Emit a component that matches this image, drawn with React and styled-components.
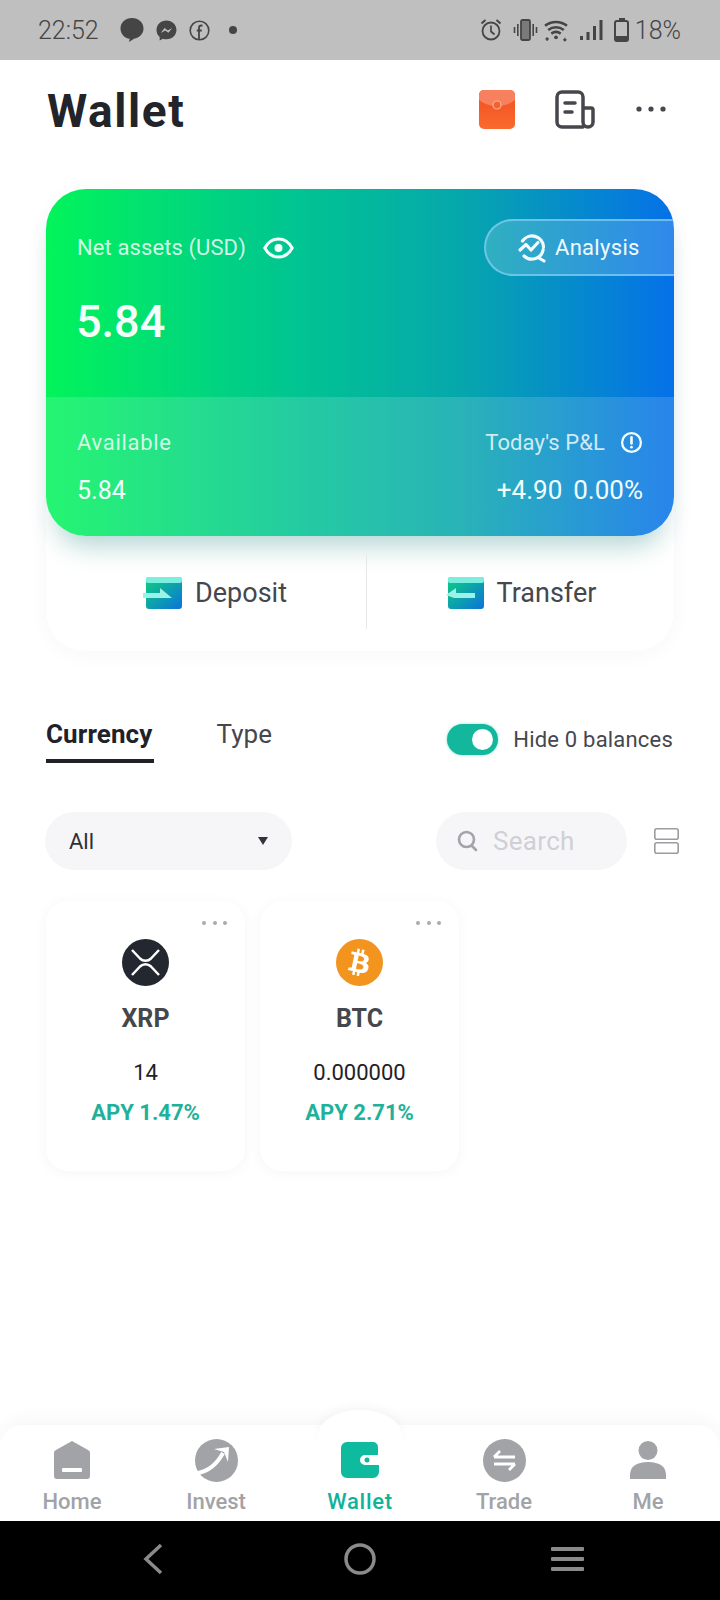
import React from "react";
import styled, { createGlobalStyle } from "styled-components";
import { FaBtc } from "react-icons/fa";

const Global = createGlobalStyle`
  html, body { margin: 0; padding: 0; background: #fff; }
  * { box-sizing: border-box; }
  body { font-family: Roboto, "Liberation Sans", sans-serif; }
`;

const Page = styled.div`
  width: 720px; height: 1600px; display: flex; flex-direction: column; overflow: hidden; background: #fff;
`;
const StatusBar = styled.div`
  height: 60px; flex: none; background: #bfbfbf; color: #454545; display: flex; align-items: center;
  padding: 0 39px 0 38px; font-size: 25px; font-weight: 300;
`;
const StatusGroup = styled.div`
  display: flex; align-items: center; gap: ${p => p.$gap ?? 12}px; margin-left: ${p => p.$ml || 0}px;
`;
const StatusIcon = styled.span`display: flex; margin-left: ${p => p.$ml || 0}px;`;
const Spacer = styled.div`flex: 1;`;
const Header = styled.header`
  height: 98px; flex: none; display: flex; align-items: center; padding: 0 54px 0 47px;
`;
const Title = styled.h1`
  margin: 4px 0 0; flex: 1; font-size: 46px; font-weight: 700; color: #22242a; letter-spacing: 1.6px;
`;
const HeaderIcons = styled.div`display: flex; align-items: center;`;
const HeaderIcon = styled.div`display: flex; margin-left: ${p => p.$ml || 0}px;`;

const Main = styled.main`flex: 1; min-height: 0; padding: 31px 46px 0; overflow: hidden;`;

const AssetPanel = styled.section`
  width: 628px; border-radius: 40px; background: #fff;
  box-shadow: 0 4px 22px rgba(40, 60, 80, 0.035);
`;
const GradientCard = styled.div`
  height: 347px; border-radius: 40px; overflow: hidden; color: #fff; display: flex; flex-direction: column;
  background: linear-gradient(90deg, #02f45a 0%, #00c690 38%, #06a7ac 66%, #0571e9 100%);
  box-shadow: 0 20px 26px -10px rgba(0, 120, 110, 0.3);
`;
const CardTop = styled.div`height: 208px; flex: none; padding-top: 30px;`;
const AssetRow = styled.div`display: flex; align-items: center; justify-content: space-between; height: 57px;`;
const AssetLabel = styled.div`
  display: flex; align-items: center; padding-left: 31px; gap: 17px; font-size: 22px; letter-spacing: .1px; color: rgba(255,255,255,.82);
`;
const AnalysisPill = styled.div`
  width: 190px; height: 57px; display: flex; align-items: center; gap: 8px; padding-left: 31px;
  border: 2px solid rgba(130, 205, 245, .75); border-right: 0; border-radius: 29px 0 0 29px;
  background: rgba(255,255,255,.17); font-size: 22px; letter-spacing: .3px; color: #f0fbff;
`;
const BigValue = styled.div`
  padding-left: 30px; margin-top: 23px; font-size: 45px; line-height: 46px; font-weight: 500; color: #f4fffb;
`;
const CardBottom = styled.div`
  flex: 1; background: rgba(255,255,255,.14); padding: 30px 31px 0 31px; display: grid;
  grid-template-columns: 1fr auto; grid-auto-rows: 30px; row-gap: 18px; align-items: center;
`;
const SmallLabel = styled.div`
  display: flex; align-items: center; gap: 15px; font-size: 22px; letter-spacing: ${p => (p.$right ? 0.1 : 0.7)}px; color: rgba(255,255,255,.8);
  justify-content: ${p => (p.$right ? "flex-end" : "flex-start")};
`;
const SmallValue = styled.div`
  display: flex; gap: 11px; font-size: ${p => (p.$right ? 26 : 25)}px; color: #f2fffb; justify-content: ${p => (p.$right ? "flex-end" : "flex-start")};
`;
const ActionRow = styled.div`
  height: 115px; display: grid; grid-template-columns: 321px 1fr; padding-top: 18px; align-items: start;
`;
const ActionButton = styled.div`
  height: 75px; display: flex; align-items: center; justify-content: center; gap: 13px; font-size: 27px; color: #45474d;
  padding-left: ${p => (p.$divider ? 20 : 2)}px; padding-top: 3px;
  border-right: ${p => (p.$divider ? "1px solid #e6e8ea" : "0")};
`;

const TabsRow = styled.div`margin-top: 65px; display: flex; align-items: center; justify-content: space-between;`;
const Tabs = styled.div`display: flex; gap: 62px;`;
const Tab = styled.div`
  height: 47px; line-height: 36px; font-size: 26px; padding-right: 2px;
  letter-spacing: .1px;
  font-weight: ${p => (p.$active ? 700 : 400)}; color: ${p => (p.$active ? "#202228" : "#45474d")};
  border-bottom: 4px solid ${p => (p.$active ? "#202228" : "transparent")};
`;
const ToggleWrap = styled.div`display: flex; align-items: center; gap: 15px; font-size: 22px; letter-spacing: .2px; margin-right: 1px; color: #45474d;`;
const Toggle = styled.div`
  width: 51px; height: 31px; border-radius: 16px; background: #12b79c; display: flex; align-items: center;
  justify-content: flex-end; padding-right: 5px; box-shadow: 0 0 3px rgba(20,200,170,.5);
`;
const Knob = styled.div`width: 21px; height: 21px; border-radius: 50%; background: #fff;`;

const FilterRow = styled.div`margin-top: 49px; display: flex; align-items: center;`;
const Select = styled.div`
  width: 247px; height: 58px; margin-left: -1px; border-radius: 29px; background: #f6f6f8; display: flex; align-items: center;
  justify-content: space-between; padding: 0 24px; font-size: 22px; color: #2e3036;
`;
const Caret = styled.div`
  width: 0; height: 0; border-left: 5.5px solid transparent; border-right: 5.5px solid transparent; border-top: 8px solid #33353a;
`;
const SearchBox = styled.div`
  width: 191px; height: 58px; margin-left: auto; border-radius: 29px; background: #f6f6f8; display: flex; align-items: center;
  gap: 15px; padding-left: 21px; font-size: 26px; letter-spacing: .3px; color: #cfd0d5;
`;
const LayoutButton = styled.div`display: flex; margin-left: 27px; margin-right: -5px;`;

const CoinGrid = styled.div`margin-top: 31px; display: grid; grid-template-columns: repeat(3, 199px); gap: 15px;`;
const CoinCard = styled.div`
  height: 270px; border-radius: 22px; background: #fff; box-shadow: 0 2px 14px rgba(30,40,60,.045);
  display: flex; flex-direction: column; align-items: center; padding-top: 18px;
`;
const Dots = styled.div`
  align-self: flex-end; margin-right: 18px; display: flex; gap: 6.500px; height: 8px; align-items: center;
  & > i { width: 4px; height: 4px; border-radius: 50%; background: #a9abaf; display: block; }
`;
const CoinLogo = styled.div`
  width: 47px; height: 47px; margin-top: 12px; border-radius: 50%; background: ${p => p.$bg};
  display: flex; align-items: center; justify-content: center; color: #fff;
`;
const CoinSymbol = styled.div`margin-top: 18px; line-height: 30px; font-size: 25px; font-weight: 700; color: #45474c;`;
const CoinAmount = styled.div`margin-top: 24px; line-height: 30px; font-size: 22px; color: #1f2126;`;
const CoinApy = styled.div`margin-top: 10px; line-height: 30px; font-size: 22px; font-weight: 700; color: #1fb19b;`;

const TabBar = styled.nav`
  position: relative; height: 96px; flex: none; background: #fff; border-radius: 22px 22px 0 0;
  box-shadow: 0 -6px 18px rgba(30,40,60,.035); display: grid; grid-template-columns: repeat(5, 144px);
`;
const Bump = styled.div`
  position: absolute; left: 318px; top: -15px; width: 84px; height: 50px; border-radius: 50%; background: #fff;
  box-shadow: 0 -5px 10px rgba(30,40,60,.03);
`;
const TabItem = styled.div`
  position: relative; display: flex; flex-direction: column; align-items: center; padding-top: 13px;
  font-size: 22px; font-weight: 500; letter-spacing: ${p => (p.$active ? 0.7 : 0)}px; color: ${p => (p.$active ? "#10b39a" : "#a2a3a6")};
`;
const TabIcon = styled.div`height: 44px; display: flex; align-items: center; justify-content: center;`;
const TabLabel = styled.div`line-height: 28px; margin-top: 6px;`;
const NavBar = styled.div`
  height: 79px; flex: none; background: #000; display: grid; grid-template-columns: repeat(3, 207px); align-items: center;
  justify-content: center; justify-items: center; padding-bottom: 4px;
`;

const Chat = () => <svg width="24" height="26" viewBox="0 0 24 26"><path d="M12 1C5.5 1 .5 5.6.5 11.5c0 5.400 4 9.600 9.200 10.300L9 25l5-3.300c5.500-1 9.500-5 9.500-10.200C23.500 5.600 18.500 1 12 1z" fill="#454545"/></svg>;
const Messenger = () => <svg width="21" height="21" viewBox="0 0 20 20"><path d="M10 .5C4.600.5.500 4.400.500 9.500c0 2.700 1.100 5 3 6.600V19.500l3.100-1.700c1.100.3 2.200.5 3.400.5 5.400 0 9.500-3.900 9.500-8.800S15.400.5 10 .5z" fill="#454545"/><path d="M4.500 12.300l3.700-4.600 3 2.300 4.300-2.300-3.700 4.500-3-2.300z" fill="#bfbfbf"/></svg>;
const Fb = () => <svg width="21" height="21" viewBox="0 0 21 21" fill="none"><circle cx="10.500" cy="10.500" r="9.300" stroke="#454545" strokeWidth="1.600"/><path d="M13.500 5.500h-1.300c-1.400 0-2.200.9-2.200 2.400V19M7.800 10.500h5" stroke="#454545" strokeWidth="1.800"/></svg>;
const Alarm = () => <svg width="22" height="24" viewBox="0 0 22 24" fill="none" stroke="#454545"><circle cx="11" cy="13" r="8.500" strokeWidth="1.800"/><path d="M11 7.500V13.500l3.500 3" strokeWidth="1.700"/><path d="M1.500 5.500L5.500 2M20.500 5.500L16.500 2" strokeWidth="2"/></svg>;
const Vibrate = () => <svg width="25" height="22" viewBox="0 0 25 22" fill="none" stroke="#454545"><rect x="8" y="1" width="9" height="20" rx="1.500" strokeWidth="1.800" fill="#7a7a7a"/><path d="M4.800 5v12M1.500 8v6M20.200 5v12M23.500 8v6" strokeWidth="1.600"/></svg>;
const Wifi = () => <svg width="24" height="23" viewBox="0 0 23 22" fill="none" stroke="#454545" strokeWidth="2.400"><path d="M1 6.500c6-5 15-5 21 0M4 10.500c4.500-3.500 10.500-3.500 15 0M7 14c2.700-2 6.300-2 9 0"/><circle cx="11.500" cy="17.500" r="1.800" fill="#454545" stroke="none"/><path d="M3 18v3M1.500 19.500L3 18l1.500 1.500M20 21v-3M18.500 19.500L20 21l1.500-1.500" strokeWidth="1.200"/></svg>;
const Signal = () => <svg width="23" height="20" viewBox="0 0 23 20" fill="#454545"><rect x="0" y="16" width="3" height="4"/><rect x="6.500" y="12" width="3" height="8"/><rect x="13" y="6" width="3" height="14"/><rect x="19.500" y="0" width="3" height="20"/></svg>;
const Battery = () => <svg width="15" height="24" viewBox="0 0 15 24" fill="none"><path d="M5 1h5v2" stroke="#454545" strokeWidth="2"/><rect x="1" y="3" width="13" height="20" rx="2" stroke="#454545" strokeWidth="2"/><rect x="2" y="18" width="11" height="4" fill="#454545"/></svg>;

const RedPacket = () => (
  <svg width="36" height="39" viewBox="0 0 36 39">
    <defs>
      <linearGradient id="rp" x1="0" y1="0" x2="0" y2="1"><stop offset="0" stopColor="#f04e20"/><stop offset="1" stopColor="#fa6a2e"/></linearGradient>
    </defs>
    <rect width="36" height="39" rx="5" fill="url(#rp)"/>
    <path d="M0 5a5 5 0 0 1 5-5h26a5 5 0 0 1 5 5v5c-5 4-11 6-18 6S5 14 0 10z" fill="#f7805f"/>
    <circle cx="18" cy="15" r="4" fill="#f4622e" stroke="#fbb197" strokeWidth="1.200"/>
  </svg>
);
const Doc = () => (
  <svg width="40" height="39" viewBox="0 0 40 39" fill="none" stroke="#45474d" strokeWidth="3.500" strokeLinecap="round" strokeLinejoin="round">
    <path d="M28 37H7a5 5 0 0 1-5-5V7a5 5 0 0 1 5-5h16a5 5 0 0 1 5 5v25a5 5 0 0 0 5 5 5 5 0 0 0 5-5V20a2 2 0 0 0-2-2h-8"/>
    <path d="M10 13h10M10 22h7"/>
  </svg>
);
const More = () => <svg width="30" height="6" viewBox="0 0 30 6" fill="#45474d"><circle cx="3" cy="3" r="2.600"/><circle cx="15" cy="3" r="2.600"/><circle cx="27" cy="3" r="2.600"/></svg>;
const Eye = () => <svg width="31" height="24" viewBox="0 0 31 24" fill="none"><path d="M1.800 12C5 6 10 3 15.500 3S26 6 29.200 12C26 18 21 21 15.500 21S5 18 1.800 12z" stroke="#f2fffb" strokeWidth="3"/><circle cx="15.500" cy="12" r="4" fill="#f2fffb"/></svg>;
const AnalysisIcon = () => (
  <svg width="30" height="30" viewBox="0 0 30 30" fill="none" stroke="#f3fbff" strokeWidth="3.200" strokeLinejoin="round" strokeLinecap="round">
    <path d="M5.500 8A11.500 11.500 0 0 1 26.500 14M26.200 16.500A11.500 11.500 0 0 1 7 23"/>
    <path d="M3 17l6-5.500 5 5.500 7-7.500"/>
    <path d="M22 25l5 3"/>
  </svg>
);
const Info = () => <svg width="23" height="23" viewBox="0 0 22 22" fill="none" stroke="#f2fffb"><circle cx="11" cy="11" r="9" strokeWidth="2.200"/><path d="M11 6v6" strokeWidth="2.500" strokeLinecap="round"/><circle cx="11" cy="15.500" r="1.300" fill="#f2fffb" stroke="none"/></svg>;
const TransferIcon = ({ id, left }) => (
  <svg width="39" height="32" viewBox="0 0 39 32" style={{ marginLeft: -2 }}>
    <defs>
      <linearGradient id={id} x1="0" y1="0" x2="1" y2="1"><stop offset="0" stopColor="#0fd07c"/><stop offset="1" stopColor="#0a73dc"/></linearGradient>
    </defs>
    <rect x="3" y="0" width="36" height="32" rx="3" fill={`url(#${id})`}/>
    <rect x="3" y="0" width="36" height="6" rx="2" fill="#7ceee0"/>
    {left
      ? <path d="M1 18l10-7v5h19v5H9z" fill="#9af3e6"/>
      : <path d="M0 16h17v-5l12 10H0z" fill="#9af3e6"/>}
  </svg>
);
const SearchGlyph = () => <svg width="21" height="22" viewBox="0 0 21 22" fill="none" stroke="#a3a4a9" strokeWidth="2.600" strokeLinecap="round"><circle cx="9.500" cy="9.500" r="7.500"/><path d="M15 16l4 4"/></svg>;
const LayoutGlyph = () => <svg width="25" height="26" viewBox="0 0 25 26" fill="none" stroke="#9a9ca0" strokeWidth="1.600"><rect x=".8" y=".8" width="23.400" height="10.500" rx="2"/><rect x=".8" y="14.700" width="23.400" height="10.500" rx="2"/></svg>;
const XrpLogo = () => (
  <svg width="33" height="29" viewBox="0 0 33 29" fill="none" stroke="#fff" strokeWidth="2.500">
    <path d="M3 2l8 8.500c3 3 8 3 11 0L30 2M3 27l8-8.500c3-3 8-3 11 0L30 27"/>
  </svg>
);
const HomeIcon = () => <svg width="36" height="38" viewBox="0 0 36 38"><path d="M18 0l16 9a3 3 0 0 1 2 3v23a3 3 0 0 1-3 3H3a3 3 0 0 1-3-3V12a3 3 0 0 1 2-3z" fill="#a2a3a6"/><rect x="8" y="27" width="20" height="4" rx="1" fill="#fff"/></svg>;
const InvestIcon = () => <svg width="43" height="43" viewBox="0 0 43 43"><circle cx="21.500" cy="21.500" r="21.500" fill="#a2a3a6"/><path d="M3 34c11-2 19-9 25-20" stroke="#fff" strokeWidth="4" fill="none"/><path d="M19 10l15-2-1 15-4-10z" fill="#fff"/></svg>;
const WalletIcon = () => <svg width="38" height="36" viewBox="0 0 38 36"><path d="M6 0h26a5 5 0 0 1 5 5v8H24a5 5 0 0 0 0 10h14v7a6 6 0 0 1-6 6H6a6 6 0 0 1-6-6V6a6 6 0 0 1 6-6z" fill="#0fbb9f"/><circle cx="26" cy="18" r="2.500" fill="#0fbb9f"/></svg>;
const TradeIcon = () => <svg width="43" height="43" viewBox="0 0 43 43"><circle cx="21.500" cy="21.500" r="21.500" fill="#a2a3a6"/><path d="M11 18h21M17 12l-6 6M32 25H11M26 31l6-6" stroke="#fff" strokeWidth="2.800" fill="none"/></svg>;
const MeIcon = () => <svg width="36" height="38" viewBox="0 0 36 38" fill="#a2a3a6"><ellipse cx="18" cy="9.500" rx="9.500" ry="9.500"/><path d="M0 38V34c0-8 6-13 18-13s18 5 18 13v4z"/></svg>;

const Back = () => <svg width="22" height="32" viewBox="0 0 22 32" fill="none" stroke="#8a8a8a" strokeWidth="3.500"><path d="M19 2L4 16l15 14"/></svg>;
const Circle = () => <svg width="32" height="32" viewBox="0 0 32 32" fill="none" stroke="#8a8a8a" strokeWidth="3.500"><circle cx="16" cy="16" r="14"/></svg>;
const Menu = () => <svg width="33" height="26" viewBox="0 0 33 26" fill="#8a8a8a"><rect width="33" height="4" y="1" rx="1"/><rect width="33" height="4" y="11" rx="1"/><rect width="33" height="4" y="21" rx="1"/></svg>;

const coins = [
  { symbol: "XRP", amount: "14", apy: "APY 1.47%", bg: "#23272f", logo: <XrpLogo /> },
  { symbol: "BTC", amount: "0.000000", apy: "APY 2.71%", bg: "#f2941d", logo: <FaBtc size={27} style={{ transform: "rotate(12deg)" }} /> },
];
const tabs = [
  { label: "Home", icon: <HomeIcon /> },
  { label: "Invest", icon: <InvestIcon /> },
  { label: "Wallet", icon: <WalletIcon />, active: true },
  { label: "Trade", icon: <TradeIcon /> },
  { label: "Me", icon: <MeIcon /> },
];

export default function App() {
  return (
    <Page>
      <Global />
      <StatusBar>
        22:52
        <StatusGroup $ml={21}><Chat /><Messenger /><Fb /></StatusGroup>
        <StatusGroup $ml={19}><svg width="8" height="8"><circle cx="4" cy="4" r="4" fill="#454545" /></svg></StatusGroup>
        <Spacer />
        <StatusGroup $gap={0}>
          <StatusIcon><Alarm /></StatusIcon>
          <StatusIcon $ml={11}><Vibrate /></StatusIcon>
          <StatusIcon $ml={6}><Wifi /></StatusIcon>
          <StatusIcon $ml={12}><Signal /></StatusIcon>
          <StatusIcon $ml={11}><Battery /></StatusIcon>
        </StatusGroup>
        <StatusGroup $ml={6}>18%</StatusGroup>
      </StatusBar>
      <Header>
        <Title>Wallet</Title>
        <HeaderIcons>
          <HeaderIcon><RedPacket /></HeaderIcon>
          <HeaderIcon $ml={40}><Doc /></HeaderIcon>
          <HeaderIcon $ml={41}><More /></HeaderIcon>
        </HeaderIcons>
      </Header>
      <Main>
        <AssetPanel>
          <GradientCard>
            <CardTop>
              <AssetRow>
                <AssetLabel>Net assets (USD) <Eye /></AssetLabel>
                <AnalysisPill><AnalysisIcon />Analysis</AnalysisPill>
              </AssetRow>
              <BigValue>5.84</BigValue>
            </CardTop>
            <CardBottom>
              <SmallLabel>Available</SmallLabel>
              <SmallLabel $right>Today's P&amp;L <Info /></SmallLabel>
              <SmallValue>5.84</SmallValue>
              <SmallValue $right><span>+4.90</span><span>0.00%</span></SmallValue>
            </CardBottom>
          </GradientCard>
          <ActionRow>
            <ActionButton $divider><TransferIcon id="dep" />Deposit</ActionButton>
            <ActionButton><TransferIcon id="tra" left />Transfer</ActionButton>
          </ActionRow>
        </AssetPanel>
        <TabsRow>
          <Tabs>
            <Tab $active>Currency</Tab>
            <Tab>Type</Tab>
          </Tabs>
          <ToggleWrap><Toggle><Knob /></Toggle>Hide 0 balances</ToggleWrap>
        </TabsRow>
        <FilterRow>
          <Select>All<Caret /></Select>
          <SearchBox><SearchGlyph />Search</SearchBox>
          <LayoutButton><LayoutGlyph /></LayoutButton>
        </FilterRow>
        <CoinGrid>
          {coins.map(c => (
            <CoinCard key={c.symbol}>
              <Dots><i /><i /><i /></Dots>
              <CoinLogo $bg={c.bg}>{c.logo}</CoinLogo>
              <CoinSymbol>{c.symbol}</CoinSymbol>
              <CoinAmount>{c.amount}</CoinAmount>
              <CoinApy>{c.apy}</CoinApy>
            </CoinCard>
          ))}
        </CoinGrid>
      </Main>
      <TabBar>
        <Bump />
        {tabs.map(t => (
          <TabItem key={t.label} $active={t.active}>
            <TabIcon>{t.icon}</TabIcon>
            <TabLabel>{t.label}</TabLabel>
          </TabItem>
        ))}
      </TabBar>
      <NavBar>
        <Back />
        <Circle />
        <Menu />
      </NavBar>
    </Page>
  );
}
